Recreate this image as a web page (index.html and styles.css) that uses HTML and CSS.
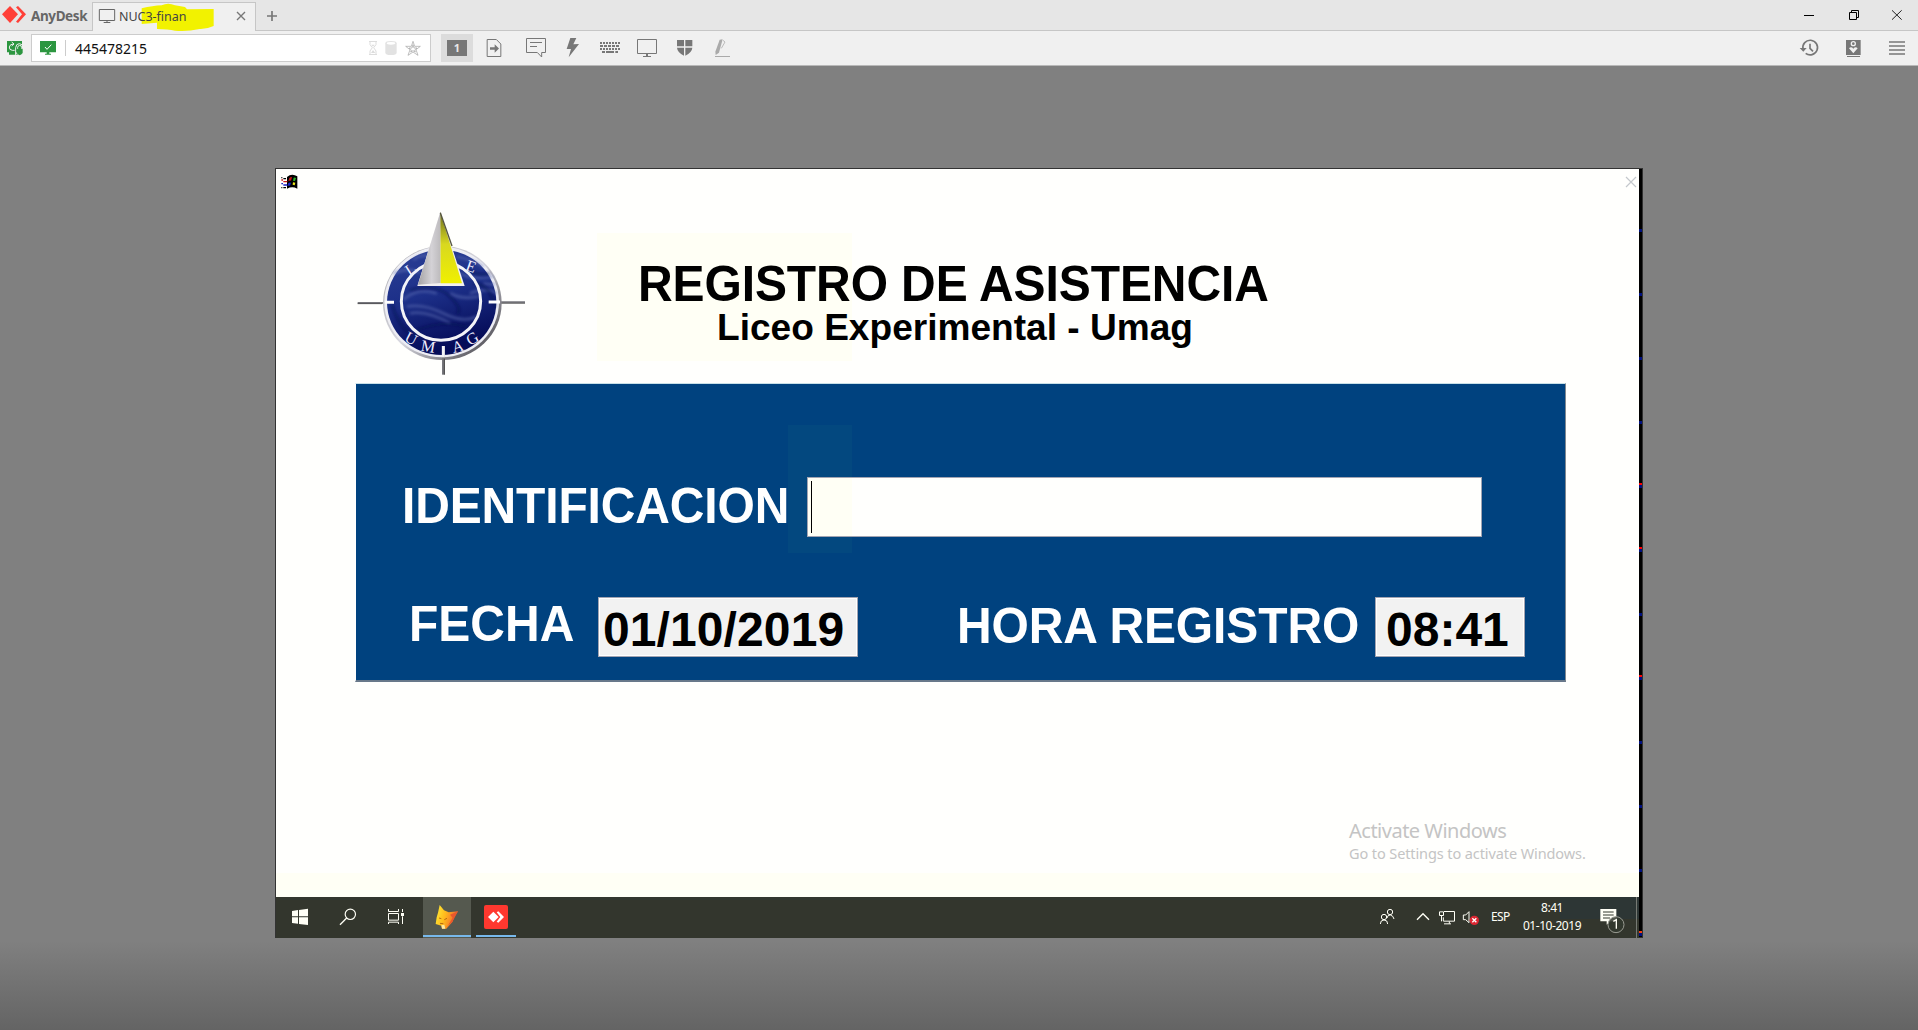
FILE: index.html
```html
<!DOCTYPE html>
<html lang="es">
<head>
<meta charset="utf-8">
<title>AnyDesk</title>
<link rel="stylesheet" href="styles.css">
</head>
<body>
<header class="tabs">
  <svg class="brand-mark" width="30" height="30" viewBox="0 0 90 90"><path d="M6 43L30 18 54 43 30 69Z" fill="#ff4038"/><path d="M48 22L54 18 78 43 54 69 48 65 66 43Z" fill="#ff4038"/></svg>
  <span class="brand">AnyDesk</span>
  <div class="tab">
    <svg class="marker" width="74" height="30" viewBox="424 6 222 90"><path d="M426 25Q460 17 486 16Q505 6 526 16L556 21 562 28 642 27V78Q620 88 600 87Q560 96 526 92 505 87 472 87V68L426 72Z" fill="#f2f200"/></svg>
    <svg class="tab-screen" width="18" height="28" viewBox="294 6 54 84"><path d="M298 28.500H344V61.500H298ZM321 62V67M311 67.500H331" fill="none" stroke="#666" stroke-width="3"/></svg>
    <span class="tab-name">NUC3-finan</span>
    <svg class="tab-close" width="12" height="28" viewBox="706 6 36 84"><path d="M712 36L736 60M736 36L712 60" stroke="#777" stroke-width="4"/></svg>
  </div>
  <svg width="34" height="31" viewBox="768 0 102 93"><path d="M801 48H831M816 33V63" stroke="#777" stroke-width="5"/></svg>
  <svg class="end" width="128" height="31" viewBox="150 0 384 93"><path d="M192 46.500H222" stroke="#000" stroke-width="3"/><path d="M328.500 37.500H349.500V58.500H328.500ZM334.500 37V31.500H355.500V52.500H350" fill="none" stroke="#000" stroke-width="3"/><path d="M456 31L485 59M485 31L456 59" stroke="#222" stroke-width="3"/></svg>
</header>
<nav class="toolbar">
  <svg width="31" height="34" viewBox="0 93 93 102"><path d="M21 123H66V157H47V161H53V164H27V157H21Z" fill="#2c9640"/><path d="M44 151H37Q27 150 28 141T41 132M35 126L42 132 35 138" fill="none" stroke="#f0f0f0" stroke-width="3"/><path d="M47 167V143Q48 131 58 131T69 143" fill="none" stroke="#f0f0f0" stroke-width="3"/><path d="M53 147V142Q54 136 59 136T65 142V147" fill="none" stroke="#f0f0f0" stroke-width="3"/><path d="M50 146H68V159Q59 172 50 159Z" fill="#2c9640"/></svg>
  <div class="address">
    <svg width="39" height="26" viewBox="96 105 117 78"><path d="M120 123H168V157H148V161H153V164H135V161H140V157H120Z" fill="#2c9640"/><path d="M135 141L141 148 154 134" fill="none" stroke="#fff" stroke-width="3"/><path d="M196.500 120V168" stroke="#ccc" stroke-width="3"/></svg>
    <span class="number">445478215</span>
    <svg class="end" width="66" height="26" viewBox="42 105 198 78"><g fill="none" stroke="#ddd" stroke-width="3"><path d="M57 124.500H81M57 163.500H81M60 126V134L67 143 60 153V162M78 126V134L71 143 78 153V162"/></g><path d="M63 159L69 150 76 159ZM64 134H74L69 140Z" fill="#ddd"/><path d="M106 130Q106 123 123 123T140 130V158Q140 165 123 165T106 158Z" fill="#e2e2e2"/><ellipse cx="123" cy="130" rx="13" ry="4" fill="#fff"/><path d="M189 124L194 139 211 139 198 149 204 166 189 156 174 166 180 149 167 139 184 139ZM189 134L186 144 177 144 184 150 182 156 189 152 196 156 194 150 201 144 192 144Z" fill="none" stroke="#a0a0a0" stroke-width="2"/></svg>
  </div>
  <div class="screen-number"><span>1</span></div>
  <svg width="42" height="34" viewBox="369 93 126 102"><path d="M411.500 118.500H439L452.500 132V169.500H411.500Z" fill="none" stroke="#777" stroke-width="3"/><path d="M420 142H434V133L447 145.500 434 158V149H420Z" fill="#777"/></svg>
  <svg width="42" height="34" viewBox="495 93 126 102"><path d="M529.500 115.500H586.500V157.500H575V171L562 157.500H529.500ZM540 127.500H576M540 139.500H561" fill="none" stroke="#777" stroke-width="3"/></svg>
  <svg width="32" height="34" viewBox="621 93 96 102"><path d="M661 114H679L670 133 687 132 656 172 663 147 650 147Z" fill="#777"/></svg>
  <svg width="38" height="34" viewBox="717 93 114 102"><path d="M750 129H810M750 147H810" stroke="#777" stroke-width="6" stroke-dasharray="6 3"/><path d="M750 138H810" stroke="#777" stroke-width="6" stroke-dasharray="9 3"/><path d="M756 156H765M768 156H792M796 156H804" stroke="#777" stroke-width="6"/></svg>
  <svg width="40" height="34" viewBox="831 93 120 102"><path d="M862.500 118.500H919.500V160.500H862.500ZM891 162V169M879 169.500H903" fill="none" stroke="#777" stroke-width="3"/><path d="M888 162H894V168H888Z" fill="#777"/></svg>
  <svg width="36" height="34" viewBox="951 93 108 102"><path d="M981 120H1002V139H981ZM1006 120H1027V139H1006ZM981 143H1002V167Q982 157 981 143ZM1006 143H1027Q1026 157 1006 167Z" fill="#777"/></svg>
  <svg width="36" height="34" viewBox="1059 93 108 102"><path d="M1109 119L1118 118 1107 158 1097 165 1096 155Z" fill="#aaa"/><path d="M1119 121L1125 126 1114 145" fill="none" stroke="#bbb" stroke-width="3"/><path d="M1095 169.500H1140" stroke="#aaa" stroke-width="3"/></svg>
  <svg class="end" width="42" height="34" viewBox="150 93 126 102"><path d="M189 147A22 22 0 1 1 197 160M210 131V145L219 154" fill="none" stroke="#777" stroke-width="5"/><path d="M179 144H200L190 155Z" fill="#777"/></svg>
  <svg width="43" height="34" viewBox="276 93 129 102"><path d="M318 120H362V165H318Z" fill="#777"/><path d="M321 169.500H360" stroke="#777" stroke-width="3"/><circle cx="340" cy="131" r="8" fill="#f0f0f0"/><circle cx="340" cy="131" r="4" fill="#777"/><path d="M327 145Q333 138 340 146Q347 138 353 145L340 160Z" fill="#f0f0f0"/></svg>
  <svg width="43" height="34" viewBox="405 93 129 102"><path d="M447 126H495M447 138H495M447 150H495M447 162H495" stroke="#777" stroke-width="5"/></svg>
</nav>
<main class="stage">
  <section class="remote">
    <div class="app">
      <svg class="win-flag" width="18" height="16" viewBox="32 43 54 48"><path d="M50 52Q64 40 81 50V87Q66 79 50 87Z" fill="#000"/><path d="M57 55Q62 51 65 53L62 63Q58 62 54 65Z" fill="#c81818"/><path d="M70 54Q74 52 77 55L74 64 68 63Z" fill="#28b428"/><path d="M54 70Q58 67 62 69L59 78Q55 77 51 79Z" fill="#1822c8"/><path d="M68 68L75 69 73 77 67 75Z" fill="#f0e818"/><path d="M33 54H36M39 57H47M33 84H36M39 84H47" stroke="#000" stroke-width="4"/><path d="M33 61H38M39 66H51" stroke="#d01818" stroke-width="4"/><path d="M33 72H38M39 76H50" stroke="#1820c8" stroke-width="4"/></svg>
      <svg class="app-close" width="12" height="12" viewBox="0 0 12 12"><path d="M1 1L11 11M11 1L1 11" stroke="#c4c8cc" stroke-width="1.200"/></svg>
      <div class="head">
        <svg class="logo" width="171" height="168" viewBox="258 150 513 504">
          <defs>
            <linearGradient id="sea" x1="0" y1="0" x2="0.300" y2="1"><stop offset="0" stop-color="#2c4096"/><stop offset=".5" stop-color="#1c2f88"/><stop offset="1" stop-color="#050c58"/></linearGradient>
            <linearGradient id="rim" x1="0" y1="0" x2="1" y2="1"><stop offset="0" stop-color="#a8a8ac"/><stop offset=".5" stop-color="#d8d8e0"/><stop offset="1" stop-color="#302e34"/></linearGradient>
            <linearGradient id="sail"><stop offset="0" stop-color="#a4a2a4"/><stop offset=".6" stop-color="#d4d2d6"/><stop offset="1" stop-color="#bcbabc"/></linearGradient>
            <linearGradient id="glow" x1="0" y1="0" x2="0" y2="1"><stop offset="0" stop-color="#6a6c20"/><stop offset=".45" stop-color="#d8d820"/><stop offset="1" stop-color="#f0f000"/></linearGradient>
            <filter id="soft"><feGaussianBlur stdDeviation="4"/></filter>
          </defs>
          <path d="M263 429H340M690 427H765" stroke="#77777c" stroke-width="6"/><path d="M263 431H336M690 430H765" stroke="#444" stroke-width="2"/>
          <ellipse cx="517" cy="429" rx="178" ry="171" fill="url(#rim)"/>
          <ellipse cx="515" cy="426" rx="172" ry="166" fill="#eeeef4"/>
          <ellipse cx="515" cy="427" rx="164" ry="158" fill="url(#sea)"/>
          <g fill="none" stroke="#6474b8" stroke-width="7" opacity=".6" filter="url(#soft)"><path d="M410 440Q460 430 520 460T620 470M420 460Q470 450 540 490M400 420Q440 380 500 400M540 400Q580 420 625 410M570 340Q610 360 670 350M370 340Q420 320 450 340M430 300Q450 280 490 290M600 400Q650 380 680 400M560 290Q610 300 640 320M640 370Q660 375 675 372"/></g>
          <g fill="none" stroke="#060d50" stroke-width="8" opacity=".55" filter="url(#soft)"><path d="M420 390Q500 370 540 410T560 460M365 430Q380 490 420 520M440 510Q520 480 590 500M610 370Q660 370 675 440M590 330Q630 350 660 340"/></g>
          <ellipse cx="513" cy="424" rx="119" ry="117" fill="none" stroke="#f4f4f8" stroke-width="9"/>
          <path d="M346 427H372M656 426H690" stroke="#fff" stroke-width="9"/>
          <path d="M511 156L442 378H584Z" fill="#f2f0f0"/>
          <path d="M511 156L444 374 512 369Z" fill="url(#sail)"/>
          <path d="M511 156L512 370H576Z" fill="url(#glow)"/>
          <path d="M511 158L546 258" stroke="#555540" stroke-width="4"/>
          <path d="M520 558V644" stroke="#77777c" stroke-width="8"/><path d="M520 558V592" stroke="#f4f4f8" stroke-width="9"/><path d="M523 596V644" stroke="#444" stroke-width="3"/>
          <g class="logo-text"><text transform="translate(430 341) rotate(-32)">L</text><text transform="translate(598 334) rotate(20)">E</text><text transform="translate(416 550) rotate(28)">U</text><text transform="translate(472 575) rotate(10)">M</text><text transform="translate(567 575) rotate(-14)">A</text><text transform="translate(615 549) rotate(-30)">G</text></g>
        </svg>
        <div class="titles"><h1>REGISTRO DE ASISTENCIA</h1><h2>Liceo Experimental - Umag</h2></div>
      </div>
      <form class="panel">
        <div class="row id-row"><label class="label id-label">IDENTIFICACION</label><div class="id-input"><i class="caret"></i></div></div>
        <div class="row"><span class="label date-label">FECHA</span><output class="value date">01/10/2019</output><span class="label hour-label">HORA REGISTRO</span><output class="value hour">08:41</output></div>
      </form>
      <div class="activate"><p class="activate-title">Activate Windows</p><p class="activate-text">Go to Settings to activate Windows.</p></div>
    </div>
    <footer class="taskbar">
      <svg width="40" height="41" viewBox="18 51 120 123"><path d="M66 93L84 90V109H66ZM87 90L114 86V109H87ZM66 112H84V131L66 129ZM87 112H114V135L87 132Z" fill="#fffff6"/></svg>
      <svg width="54" height="41" viewBox="138 51 162 123"><circle cx="241" cy="103" r="15.500" fill="none" stroke="#fffff6" stroke-width="3.500"/><path d="M230 114L210 134" stroke="#fffff6" stroke-width="4"/></svg>
      <svg width="53" height="41" viewBox="300 51 159 123"><path d="M355.500 87V94.500H385.500V87M355.500 100.500H385.500V120.500H355.500ZM355.500 132V126.500H385.500V132M397.500 87V96M397.500 109V132" fill="none" stroke="#fffff6" stroke-width="3"/><path d="M393 99H402V108H393Z" fill="#fffff6"/></svg>
      <svg class="fox" width="48" height="41" viewBox="459 51 144 123"><defs><linearGradient id="fur" x1="0" y1="0" x2="1" y2=".3"><stop offset="0" stop-color="#fff038"/><stop offset=".5" stop-color="#ffb91c"/><stop offset="1" stop-color="#f2662c"/></linearGradient></defs><path d="M509 75L522 91 536 97 564 94 554 108 547 126 529 146H516L514 137 497 132 500 112 504 98Z" fill="url(#fur)"/><path d="M564 94L540 104 548 113 535 135 526 145 547 126Z" fill="#e9582d"/><path d="M514 136L523 134 526 146H516Z" fill="#ffe9a0"/><path d="M507 114L514 116M523 119L531 115M510 130L520 131" stroke="#b96b10" stroke-width="3"/><path d="M459 168H603" stroke="#78b9ec" stroke-width="6"/></svg>
      <svg width="50" height="41" viewBox="603 51 150 123"><rect x="642" y="75" width="72" height="72" rx="6" fill="#ff382f"/><path d="M654 111L670 95 686 111 670 127ZM680 97L685 94 702 111 685 128 680 125 691 111Z" fill="#fff"/><path d="M618 168H738" stroke="#78b9ec" stroke-width="6"/></svg>
      <svg class="end" width="37" height="41" viewBox="159 291 111 123"><g fill="none" stroke="#fffff6" stroke-width="3"><circle cx="210" cy="336" r="8"/><path d="M201 354Q203 344 211 345 220 347 222 357"/><circle cx="192" cy="351" r="8"/><path d="M181 372Q181 360 192 360T203 372"/></g></svg>
      <svg width="24" height="41" viewBox="270 291 72 123"><path d="M291 359L309 341 327 359" fill="none" stroke="#fffff6" stroke-width="4"/></svg>
      <svg width="24" height="41" viewBox="342 291 72 123"><path d="M372 334.500H403.500V363.500H370M370 352V363M388 364V371M372 371.500H393M358.500 335.500H370.500V346.500H358.500ZM364.500 347V364" fill="none" stroke="#fffff6" stroke-width="3"/></svg>
      <svg width="26" height="41" viewBox="414 291 78 123"><path d="M430 345H437L447 335V368L437 359H430Z" fill="none" stroke="#fffff6" stroke-width="3"/><circle cx="463" cy="361" r="14" fill="#dc2632"/><path d="M457 355L469 367M469 355L457 367" stroke="#fff" stroke-width="4"/></svg>
      <span class="lang">ESP</span>
      <div class="clock"><span class="time">8:41</span><span>01-10-2019</span></div>
      <svg width="43" height="41" viewBox="821 291 129 123"><path d="M843 327H891V364H874L862 374V364H843Z" fill="#fffff6"/><path d="M851 336H883M851 345H883M851 354H872" stroke="#33382f" stroke-width="3"/><circle cx="890" cy="374" r="24" fill="#33382f" fill-opacity=".85" stroke="#999b92" stroke-width="3"/><path d="M882 364L891 359V386" fill="none" stroke="#fffff6" stroke-width="4"/></svg>
      <i class="peek"></i>
    </footer>
  </section>
</main>
</body>
</html>
```
FILE: styles.css
```css
* { box-sizing: border-box; }
body { margin: 0; width: 1918px; height: 1030px; overflow: hidden; display: flex; flex-direction: column; font-family: "Noto Sans", "Open Sans", sans-serif; background: #808080; }
svg { display: block; flex: none; }
.end { margin-left: auto; }
p, h1, h2 { margin: 0; }

.tabs { height: 31px; flex: none; display: flex; background: #e6e6e6; border-bottom: 1px solid #c6c6c6; }
.brand { width: 62px; padding-left: 1px; font-size: 13.500px; line-height: 33px; font-weight: 700; color: #666; letter-spacing: -.4px; }
.tab { position: relative; width: 164px; height: 29px; margin-top: 2px; display: flex; background: #f0f0f0; border: 1px solid #c6c6c6; border-bottom: 0; }
.marker { position: absolute; left: 48px; top: -1px; }
.tab-screen { position: relative; margin-left: 5px; margin-top: -1px; }
.tab-name { position: relative; margin-left: 3px; font-size: 12.500px; line-height: 27px; letter-spacing: -.03px; color: #444; white-space: nowrap; }
.tab-close { margin: -1px 8px 0 auto; }

.toolbar { height: 35px; flex: none; display: flex; background: #f0f0f0; border-bottom: 1px solid #b8b8b8; }
.address { width: 400px; height: 28px; margin-top: 3px; display: flex; background: #fff; border: 1px solid #ccc; }
.number { padding-left: 4px; font-size: 14px; line-height: 27px; color: #111; }
.screen-number { width: 32px; height: 28px; margin: 3px 0 0 10px; padding: 6px; background: #dcdcdc; }
.screen-number span { display: block; height: 16px; background: #777; color: #e8e8e8; font-size: 11px; font-weight: 700; line-height: 16px; text-align: center; }

.stage { flex: 1; padding: 102px 0 0 275px; background: linear-gradient(#808080 875px, #646464 964px); }
.remote { position: relative; width: 1368px; height: 770px; padding-right: 3px; border: 1px solid #333; border-right: 0; background: #fff; display: flex; flex-direction: column; }
.remote::after { content: ""; position: absolute; right: 0; top: 0; width: 3px; height: 768px; border-right: 1px solid #303030; background: linear-gradient(#f00, #f00) 0 314px / 3px 2px no-repeat, linear-gradient(#f00, #f00) 0 378px / 3px 2px no-repeat, linear-gradient(#f00, #f00) 0 506px / 3px 2px no-repeat, linear-gradient(#f43c10, #f43c10) 0 762px / 3px 2px no-repeat, repeating-linear-gradient(#000 0 60px, #001080 60px 63px, #000 63px 64px); }
.app { position: relative; height: 728px; flex: none; background: linear-gradient(#fffff5, #fffff5) 321px 64px / 255px 128px no-repeat, linear-gradient(#fffff5, #fffff5) 0 704px / 100% 24px no-repeat, #fffffd; }
.win-flag { position: absolute; left: 5px; top: 5px; }
.app-close { position: absolute; right: 3px; top: 7px; }
.head { height: 214px; display: flex; padding: 41px 0 0 80px; font-family: "Liberation Sans", Arial, sans-serif; }
.logo-text { font: 48px "Liberation Serif", serif; fill: #eef; text-anchor: middle; }
.titles { width: 640px; margin-left: 108px; padding-top: 52px; color: #000; white-space: nowrap; }
h1 { padding-left: 3px; font-size: 48px; line-height: 46px; letter-spacing: -.1px; transform: scaleY(1.04); transform-origin: 0 40px; }
h2 { padding-left: 82px; font-size: 37.100px; line-height: 38px; }

.panel { position: relative; width: 1211px; height: 299px; margin-left: 79px; padding: 93px 0 0 45px; border: 1px solid #808890; border-bottom: 2px solid #68788a; border-left-color: #fff; border-top-color: #c8e0e8; background: linear-gradient(#03487f, #03487f) 432px 41px / 64px 128px no-repeat, #00427f; font-family: "Liberation Sans", Arial, sans-serif; font-weight: 700; font-size: 48px; }
.row { display: flex; height: 60px; }
.id-row { height: 120px; }
.label { color: #fff; line-height: 48px; height: 48px; white-space: nowrap; transform: scaleY(1.04); transform-origin: 0 41px; }
.id-label { width: 406px; margin-top: 6px; padding-left: 1px; letter-spacing: -.15px; }
.id-input { width: 675px; height: 60px; border: 1px solid #a2a4b2; background: linear-gradient(#fffff5, #fffff5) 0 0 / 44px 100% no-repeat, #fffffd; padding: 3px; }
.caret { display: block; width: 1px; height: 52px; background: #000; }
.date-label { width: 189px; padding-left: 8px; margin-top: 4px; }
.value { height: 60px; border: 1px solid #a2a4b2; background: #f2f2f2; color: #000; line-height: 64px; white-space: nowrap; box-shadow: inset 0 0 0 1px #fff; }
.date { width: 260px; padding-left: 4px; margin-left: 8px; letter-spacing: .1px; }
.hour-label { width: 420px; margin: 6px 0 0 98px; padding-left: 1px; letter-spacing: -.1px; }
.hour { width: 150px; padding-left: 10px; margin-left: -1px; }

.activate { margin: 136px 0 0 1073px; color: #c4c4c4; white-space: nowrap; }
.activate-title { font-size: 20px; line-height: 26px; letter-spacing: -.5px; }
.activate-text { font-size: 14.500px; line-height: 18px; letter-spacing: -.1px; }

.taskbar { height: 41px; flex: none; display: flex; background: linear-gradient(#2d3635, #2d3635) 1284px 0 / 80px 22px no-repeat, #33362d; color: #fffff6; font-size: 12px; }
.fox { background: #55594f; }
.lang { width: 35px; padding-left: 7px; line-height: 40px; letter-spacing: -.6px; }
.clock { width: 74px; padding: 2px 8px 0 0; display: flex; flex-direction: column; align-items: center; line-height: 18px; letter-spacing: -.45px; white-space: nowrap; }
.peek { width: 4px; border-left: 1px solid #777a74; }
```
